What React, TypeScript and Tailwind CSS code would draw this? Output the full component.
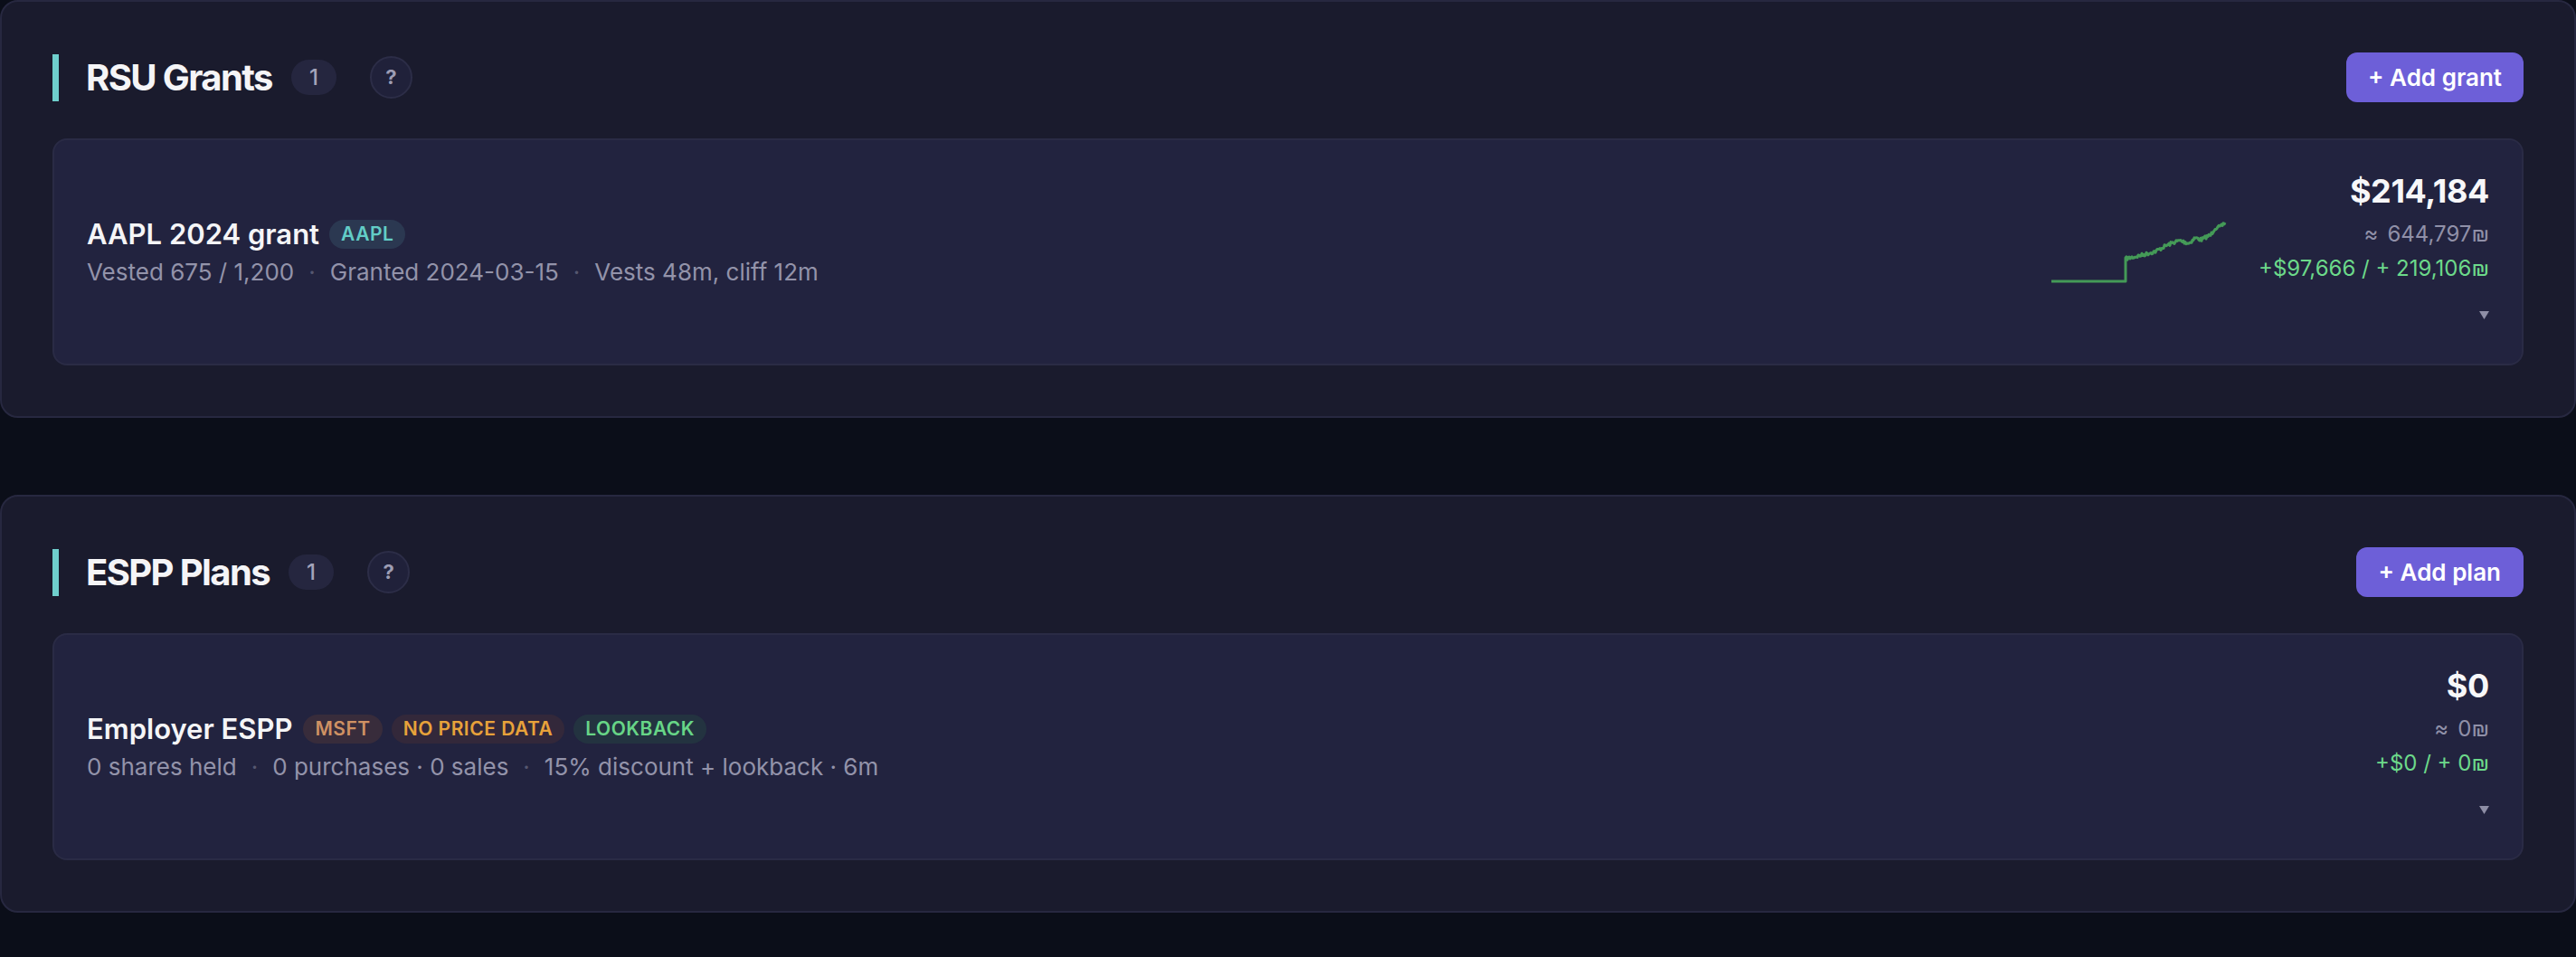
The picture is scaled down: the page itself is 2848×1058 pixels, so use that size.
import React from "react";

function seeded(seed: number) {
  let s = seed;
  return () => {
    s = (s * 16807) % 2147483647;
    return (s - 1) / 2147483646;
  };
}

function sparkPath(): string {
  const rnd = seeded(7);
  const keys: [number, number][] = [
    [82, 40], [92, 38], [100, 36], [115, 32], [126, 26], [135, 22], [142, 20],
    [152, 23], [159, 17], [166, 19], [171, 16], [176, 14], [181, 6], [187, 5], [192, 0],
  ];
  let d = "M0 65 L82 65 L82 39";
  for (let i = 0; i < keys.length - 1; i++) {
    const [x0, y0] = keys[i];
    const [x1, y1] = keys[i + 1];
    for (let x = x0 + 1; x <= x1; x++) {
      const t = (x - x0) / (x1 - x0);
      const y = y0 + (y1 - y0) * t + (rnd() - 0.5) * 4;
      d += ` L${x} ${y.toFixed(1)}`;
    }
  }
  return d;
}

const Sep = () => <span className="mx-[16px] text-[#565770]">·</span>;

function Caret() {
  return (
    <svg width="11" height="9" viewBox="0 0 11 9">
      <path d="M0 0 L11 0 L5.5 9 Z" fill="#8e8ea6" />
    </svg>
  );
}

type BadgeProps = { text: string; cls: string };
const Badge = ({ text, cls }: BadgeProps) => (
  <span className={`flex h-[32px] items-center rounded-full px-[13px] text-[21px] font-semibold tracking-[0.5px] ${cls}`}>
    {text}
  </span>
);

function Header({ title, button, px }: { title: string; button: string; px: string }) {
  return (
    <div className="flex h-[55px] items-center justify-between">
      <div className="flex items-center">
        <div className="h-[52px] w-[7px] bg-[#6fcfcd]" />
        <h2 className="ml-[30px] text-[40px] font-bold leading-[48px] tracking-[-0.04em] text-[#f5f5f7]">{title}</h2>
        <span className="ml-[21px] flex h-[39px] w-[50px] items-center justify-center rounded-full bg-[#25263f] text-[24px] font-medium text-[#a3a3ba]">
          1
        </span>
        <span className="ml-[37px] flex h-[47px] w-[47px] items-center justify-center rounded-full border-2 border-[#2c2d47] bg-[#20213a] text-[22px] font-bold text-[#9d9db4]">
          ?
        </span>
      </div>
      <button className={`h-[55px] rounded-[12px] bg-[#6d5fd8] text-[26px] font-semibold text-white ${px}`}>
        {button}
      </button>
    </div>
  );
}

function ValueColumn({ value, ils, gain }: { value: string; ils: string; gain: string }) {
  return (
    <div className="flex flex-col items-end">
      <div className="text-[36px] font-bold leading-[40px] tracking-[-0.01em] text-[#f7f7f9]">{value}</div>
      <div className="mt-[12px] text-[24px] leading-[32px] text-[#9090a8]">
        <span className="mr-[10px]">≈</span>
        {ils}
      </div>
      <div className="mt-[6px] text-[24px] leading-[32px] text-[#6cd98a]">{gain}</div>
      <div className="mt-[31px] h-[22px]">
        <Caret />
      </div>
    </div>
  );
}

export default function App() {
  const path = sparkPath();
  return (
    <div className="min-h-screen bg-[#0b0e19] font-['Inter',sans-serif]">
      <div className="flex flex-col gap-[85px]">
        <section className="rounded-[20px] border-2 border-[#272840] bg-[#1a1b2d] p-[56px]">
          <Header title="RSU Grants" button="+ Add grant" px="px-[24px]" />
          <div className="mt-[40px] flex items-center rounded-[16px] border-2 border-[#2a2b45] bg-[#22233f] p-[36px]">
            <div className="flex flex-1 flex-col">
              <div className="flex h-[40px] items-center">
                <span className="text-[31px] font-semibold leading-[40px] text-[#f5f5f7]">AAPL 2024 grant</span>
                <span className="ml-[11px]">
                  <Badge text="AAPL" cls="bg-[#2b3851] text-[#62cdc6]" />
                </span>
              </div>
              <div className="mt-[4px] text-[26px] leading-[36px] text-[#9393aa]">
                Vested 675 / 1,200
                <Sep />
                Granted 2024-03-15
                <Sep />
                Vests 48m, cliff 12m
              </div>
            </div>
            <div className="flex items-center gap-[35px]">
              <svg width="196" height="72" viewBox="0 0 196 72">
                <g transform="translate(2,3)">
                  <path d={path} fill="none" stroke="#449a57" strokeWidth="3" strokeLinejoin="round" />
                </g>
              </svg>
              <ValueColumn value="$214,184" ils="644,797₪" gain="+$97,666 / + 219,106₪" />
            </div>
          </div>
        </section>

        <section className="rounded-[20px] border-2 border-[#272840] bg-[#1a1b2d] p-[56px]">
          <Header title="ESPP Plans" button="+ Add plan" px="px-[25px]" />
          <div className="mt-[40px] flex items-center rounded-[16px] border-2 border-[#2a2b45] bg-[#22233f] p-[36px]">
            <div className="flex flex-1 flex-col">
              <div className="flex h-[40px] items-center">
                <span className="text-[31px] font-semibold leading-[40px] text-[#f5f5f7]">Employer ESPP</span>
                <div className="ml-[12px] flex items-center gap-[10px]">
                  <Badge text="MSFT" cls="bg-[#382c3b] text-[#cf9163]" />
                  <Badge text="NO PRICE DATA" cls="bg-[#33283a] text-[#e8a23a]" />
                  <Badge text="LOOKBACK" cls="bg-[#233340] text-[#67d587]" />
                </div>
              </div>
              <div className="mt-[4px] text-[26px] leading-[36px] text-[#9393aa]">
                0 shares held
                <Sep />
                0 purchases · 0 sales
                <Sep />
                15% discount + lookback · 6m
              </div>
            </div>
            <ValueColumn value="$0" ils="0₪" gain="+$0 / + 0₪" />
          </div>
        </section>
      </div>
    </div>
  );
}
